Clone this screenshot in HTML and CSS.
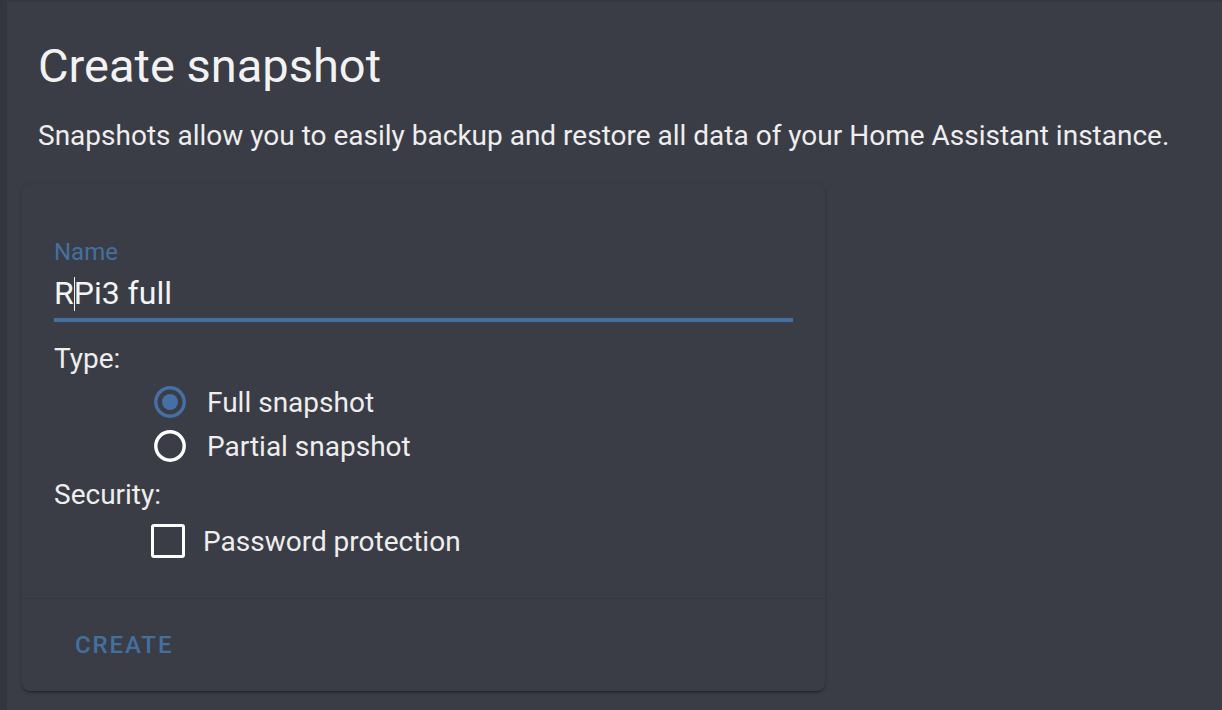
FILE: index.html
```html
<!DOCTYPE html>
<html lang="en">
<head>
<meta charset="utf-8">
<title>Create snapshot</title>
<link rel="stylesheet" href="styles.css">
</head>
<body>
<div class="app">
  <aside class="rail"></aside>
  <main class="main">
    <div class="intro">
      <h1 class="title">Create snapshot</h1>
      <p class="desc">Snapshots allow you to easily backup and restore all data of your Home Assistant instance.</p>
    </div>
    <section class="card">
      <div class="card-body">
        <div class="field">
          <div class="field-label">Name</div>
          <div class="field-input">R<span class="caret"></span>Pi3 full</div>
          <div class="field-line"></div>
        </div>
        <div class="group-label">Type:</div>
        <div class="options">
          <div class="option">
            <svg class="radio" width="32" height="32" viewBox="0 0 32 32"><circle cx="16" cy="16" r="14.2" fill="none" stroke="#4470a6" stroke-width="3.4"/><circle cx="16" cy="16" r="8" fill="#4470a6"/></svg>
            <span class="option-text">Full snapshot</span>
          </div>
          <div class="option">
            <svg class="radio" width="32" height="32" viewBox="0 0 32 32"><circle cx="16" cy="16" r="14.2" fill="none" stroke="#ffffff" stroke-width="3.4"/></svg>
            <span class="option-text">Partial snapshot</span>
          </div>
        </div>
        <div class="group-label">Security:</div>
        <div class="options">
          <div class="option check-option">
            <span class="checkbox"></span>
            <span class="option-text">Password protection</span>
          </div>
        </div>
      </div>
      <div class="card-actions">
        <button class="btn">Create</button>
      </div>
    </section>
  </main>
</div>
</body>
</html>
```
FILE: styles.css
```css
html, body {
  margin: 0;
  padding: 0;
  height: 100%;
}
body {
  background: #3a3d46;
  font-family: Roboto, "Noto Sans", sans-serif;
  color: #ececec;
  overflow: hidden;
}
.app {
  display: flex;
  height: 100%;
}
.rail {
  width: 7px;
  flex: 0 0 7px;
  background: #33363d;
}
.main {
  flex: 1;
  border-top: 2px solid #34373e;
  padding: 36px 15px 0 15px;
}
.intro {
  padding-left: 16px;
}
.title {
  margin: 0;
  font-size: 47px;
  font-weight: 400;
  line-height: 56px;
  color: #f2f2f2;
}
.desc {
  margin: 25px 0 0 0;
  font-size: 28px;
  line-height: 33px;
  color: #eeeeee;
}
.card {
  margin-top: 32px;
  width: 803px;
  background: #3a3d46;
  border-radius: 8px;
  box-shadow: 0 2px 2px 0 rgba(0,0,0,0.14), 0 1px 5px 0 rgba(0,0,0,0.12), 0 3px 1px -2px rgba(0,0,0,0.2);
}
.card-body {
  padding: 54px 32px 35px 32px;
}
.field-label {
  font-size: 24px;
  line-height: 28px;
  color: #44709f;
}
.field-input {
  margin-top: 8px;
  font-size: 32px;
  line-height: 38px;
  color: #f4f4f4;
}
.caret {
  display: inline-block;
  width: 1px;
  height: 34px;
  margin-right: -1px;
  background: #f4f4f4;
  vertical-align: -7px;
}
.field-line {
  margin-top: 6px;
  height: 4px;
  background: #44709f;
}
.group-label {
  font-size: 28px;
  line-height: 33px;
  color: #eeeeee;
}
.field + .group-label {
  margin-top: 20px;
}
.options + .group-label {
  margin-top: 10px;
}
.options {
  padding-left: 100px;
  margin-top: 5px;
}
.option {
  display: flex;
  align-items: center;
  height: 44px;
}
.radio {
  flex: 0 0 32px;
  margin-right: 21px;
}
.option-text {
  font-size: 28px;
  color: #eeeeee;
}
.check-option {
  margin-left: -3px;
  margin-top: 8px;
}
.checkbox {
  box-sizing: border-box;
  width: 34px;
  height: 34px;
  border: 3.5px solid #ffffff;
  border-radius: 3px;
  margin-right: 18px;
}
.card-actions {
  border-top: 1px solid #33363e;
  height: 92px;
  display: flex;
  align-items: center;
  padding-left: 53px;
}
.btn {
  background: none;
  border: none;
  padding: 0;
  font-family: Roboto, "Noto Sans", sans-serif;
  font-size: 24px;
  font-weight: 500;
  letter-spacing: 1.9px;
  text-transform: uppercase;
  color: #44709f;
}
```
